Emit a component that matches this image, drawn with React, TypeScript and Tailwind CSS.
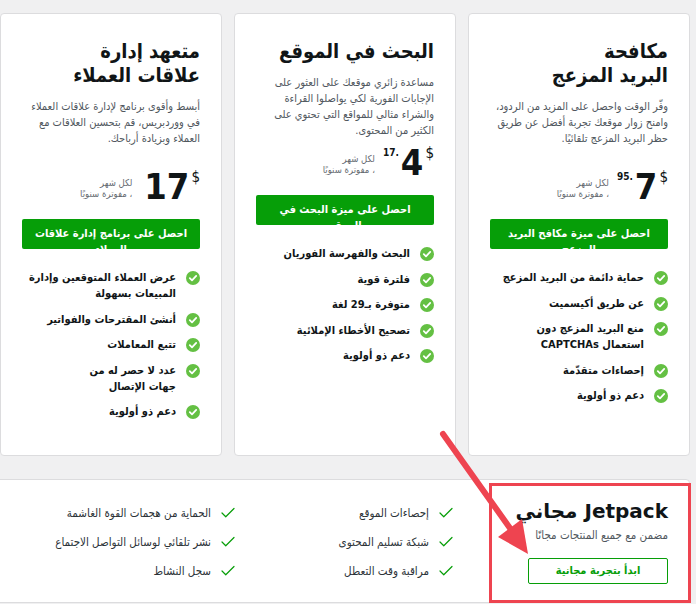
import { Check } from "lucide-react";

interface Plan {
  title: React.ReactNode;
  desc: string;
  price: string;
  cents?: string;
  button: string;
  features: React.ReactNode[];
}

const plans: Plan[] = [
  {
    title: (
      <>
        مكافحة
        <br />
        البريد المزعج
      </>
    ),
    desc: "وفّر الوقت واحصل على المزيد من الردود، وامنح زوار موقعك تجربة أفضل عن طريق حظر البريد المزعج تلقائيًا.",
    price: "7",
    cents: ".95",
    button: "احصل على ميزة مكافح البريد المزعج",
    features: [
      "حماية دائمة من البريد المزعج",
      "عن طريق أكيسميت",
      <>
        منع البريد المزعج دون
        <br />
        استعمال CAPTCHAs
      </>,
      "إحصاءات متقدّمة",
      "دعم ذو أولوية",
    ],
  },
  {
    title: "البحث في الموقع",
    desc: "مساعدة زائري موقعك على العثور على الإجابات الفورية لكي يواصلوا القراءة والشراء مثالي للمواقع التي تحتوي على الكثير من المحتوى.",
    price: "4",
    cents: ".17",
    button: "احصل على ميزة البحث في الموقع",
    features: [
      "البحث والفهرسة الفوريان",
      "فلترة قوية",
      "متوفرة بـ29 لغة",
      "تصحيح الأخطاء الإملائية",
      "دعم ذو أولوية",
    ],
  },
  {
    title: (
      <>
        متعهد إدارة
        <br />
        علاقات العملاء
      </>
    ),
    desc: "أبسط وأقوى برنامج لإدارة علاقات العملاء في ووردبريس، قم بتحسين العلاقات مع العملاء وبزيادة أرباحك.",
    price: "17",
    button: "احصل على برنامج إدارة علاقات العملاء",
    features: [
      <>
        عرض العملاء المتوقعين وإدارة
        <br />
        المبيعات بسهولة
      </>,
      "أنشئ المقترحات والفواتير",
      "تتبع المعاملات",
      <>
        عدد لا حصر له من
        <br />
        جهات الإتصال
      </>,
      "دعم ذو أولوية",
    ],
  },
];

const freeCols = [
  ["إحصاءات الموقع", "شبكة تسليم المحتوى", "مراقبة وقت التعطل"],
  ["الحماية من هجمات القوة الغاشمة", "نشر تلقائي لوسائل التواصل الاجتماع", "سجل النشاط"],
];

function CheckCircle() {
  return (
    <svg width="14" height="14" viewBox="0 0 14 14" className="shrink-0 mt-[1px]">
      <circle cx="7" cy="7" r="7" fill="#64c043" />
      <path d="M3.8 7.2 6 9.3l4.2-4.4" fill="none" stroke="#fff" strokeWidth="1.8" strokeLinecap="round" strokeLinejoin="round" />
    </svg>
  );
}

function PlanCard({ plan }: { plan: Plan }) {
  return (
    <div className="w-[222px] h-[443px] shrink-0 bg-white border border-[#dcdcde] rounded-[4px] px-[21px] pt-[25px]">
      <h2 className="text-[20px] font-bold leading-[24px] text-[#101517] whitespace-nowrap">{plan.title}</h2>
      <p className="mt-3 min-h-[64px] text-[11px] leading-4 text-[#50575e]">{plan.desc}</p>

      {/* Price */}
      <div className="mt-[6px] flex items-start h-[36px]">
        <span className="text-[15px] leading-none text-[#101517] mt-[1px]">$</span>
        <span className="text-[36px] font-bold leading-none text-[#101517] mr-[2px]">{plan.price}</span>
        {plan.cents && (
          <span className="text-[10px] font-bold leading-none text-[#101517] mt-[3px] mr-[2px]">{plan.cents}</span>
        )}
        <div className={`mt-[8px] text-[9.5px] leading-[11px] text-[#646970] ${plan.cents ? "mr-2" : "mr-3"}`}>
          <div>لكل شهر</div>
          <div>، مفوترة سنويًا</div>
        </div>
      </div>

      <div className="mt-[14px] h-[30px] overflow-hidden rounded-[2px] bg-[#069e08] px-3 pt-[7px] text-center text-[11px] font-bold leading-4 text-white">
        {plan.button}
      </div>

      <ul className="mt-[21px] flex flex-col gap-[9.5px]">
        {plan.features.map((f, i) => (
          <li key={i} className="flex items-start gap-[10px]">
            <CheckCircle />
            <span className="text-[11px] font-bold leading-4 text-[#101517]">{f}</span>
          </li>
        ))}
      </ul>
    </div>
  );
}

export default function App() {
  return (
    <div
      dir="rtl"
      className="relative w-[696px] h-[604px] overflow-hidden bg-[#f0f0f1] font-['DejaVu_Sans_Condensed','DejaVu_Sans',sans-serif]"
    >
      <div className="flex gap-3 pt-[13px] pr-[6px]">
        {plans.map((p, i) => (
          <PlanCard key={i} plan={p} />
        ))}
      </div>

      {/* Free Jetpack panel */}
      <div className="mt-[23px] mr-[6px] -ml-[4px] h-[124px] bg-white border border-[#dcdcde] rounded-[4px] flex">
        <div className="w-[221px] shrink-0 pr-[21px] pt-[19px]">
          <h3 className="font-['DejaVu_Sans',sans-serif] text-[20px] font-bold leading-6 text-[#101517]">Jetpack مجاني</h3>
          <p className="mt-[4px] text-[11.5px] leading-4 text-[#50575e]">مضمن مع جميع المنتجات مجانًا</p>
          <button className="mt-[15px] w-[140px] h-[26px] border border-[#069e08] rounded-[2px] text-[11px] font-bold text-[#069e08]">
            ابدأ بتجربة مجانية
          </button>
        </div>
        {freeCols.map((col, i) => (
          <ul key={i} className={`${i === 0 ? "w-[218px]" : "flex-1"} pr-[13px] pt-[24px] flex flex-col gap-[11px]`}>
            {col.map((f) => (
              <li key={f} className="flex items-center gap-2">
                <Check size={18} strokeWidth={1.6} className="text-[#069e08] shrink-0" />
                <span className="text-[11.5px] leading-4 text-[#2c3338]">{f}</span>
              </li>
            ))}
          </ul>
        ))}
      </div>

      {/* Annotation: red box + arrow */}
      <div className="absolute left-[489px] top-[483px] w-[202px] h-[120px] border-[3px] border-[#ee4450] pointer-events-none" />
      <svg className="absolute inset-0 pointer-events-none" width="696" height="604">
        <line x1="443" y1="434" x2="512" y2="531" stroke="#ee4450" strokeWidth="6" strokeLinecap="round" />
        <polygon points="528,554 498,537 522,519" fill="#ee4450" />
      </svg>
    </div>
  );
}
